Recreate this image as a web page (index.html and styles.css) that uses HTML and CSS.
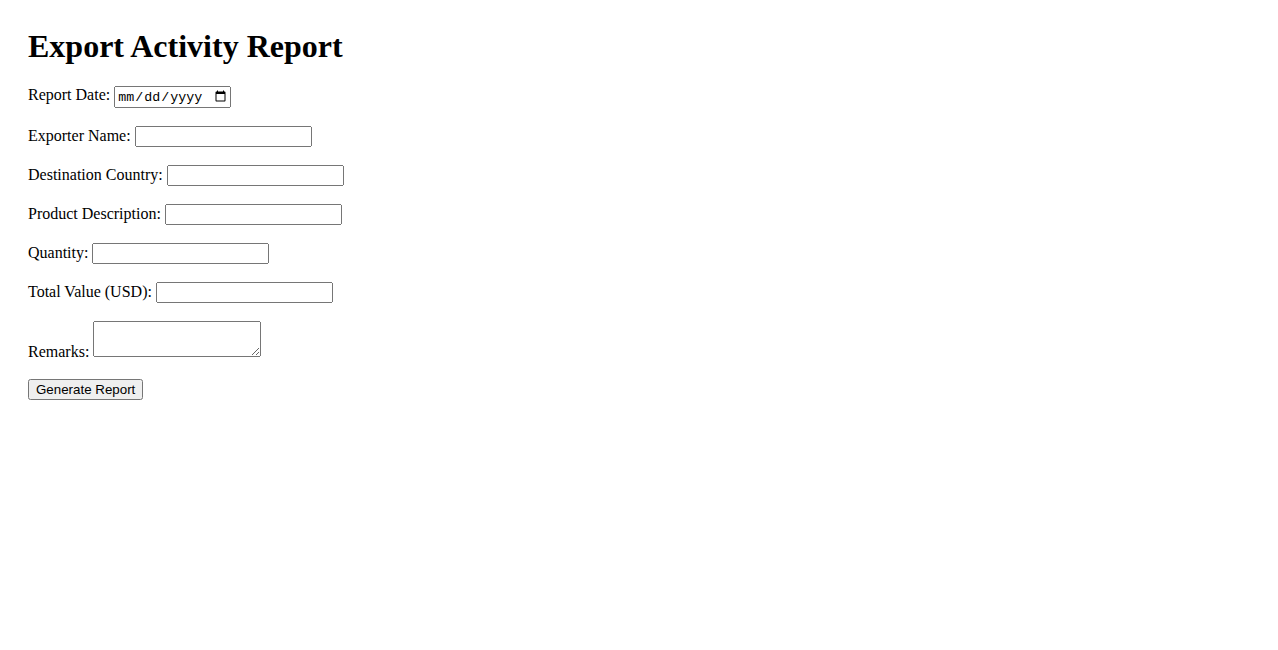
FILE: index.html
```html
<!DOCTYPE html>
<html>
<head>
    <title>Export Activity Report</title>
    <link rel="stylesheet" href="styles.css">
</head>
<body>
    <h1>Export Activity Report</h1>
    <form id="reportForm">
        <label for="reportDate">Report Date:</label>
        <input type="date" id="reportDate" name="reportDate"><br><br>

        <label for="exporterName">Exporter Name:</label>
        <input type="text" id="exporterName" name="exporterName"><br><br>

        <label for="destinationCountry">Destination Country:</label>
        <input type="text" id="destinationCountry" name="destinationCountry"><br><br>

        <label for="productDescription">Product Description:</label>
        <input type="text" id="productDescription" name="productDescription"><br><br>

        <label for="quantity">Quantity:</label>
        <input type="text" id="quantity" name="quantity"><br><br>

        <label for="totalValue">Total Value (USD):</label>
        <input type="text" id="totalValue" name="totalValue"><br><br>

        <label for="remarks">Remarks:</label>
        <textarea id="remarks" name="remarks"></textarea><br><br>

        <button type="button">Generate Report</button>
    </form>
</body>
</html>
```

FILE: styles.css
```css
body {
    font-family: "Liberation Serif", "Times New Roman", serif;
    padding: 20px;
}

h1 {
    margin-top: 0;
}

input,
textarea,
button {
    font-family: "Liberation Sans", Arial, sans-serif;
}

input[type="text"] {
    width: 177px;
    box-sizing: border-box;
}

input[type="date"] {
    width: 117px;
    box-sizing: border-box;
    font-family: "Liberation Mono", monospace;
}

textarea {
    width: 168px;
    height: 36px;
    box-sizing: border-box;
}
```
